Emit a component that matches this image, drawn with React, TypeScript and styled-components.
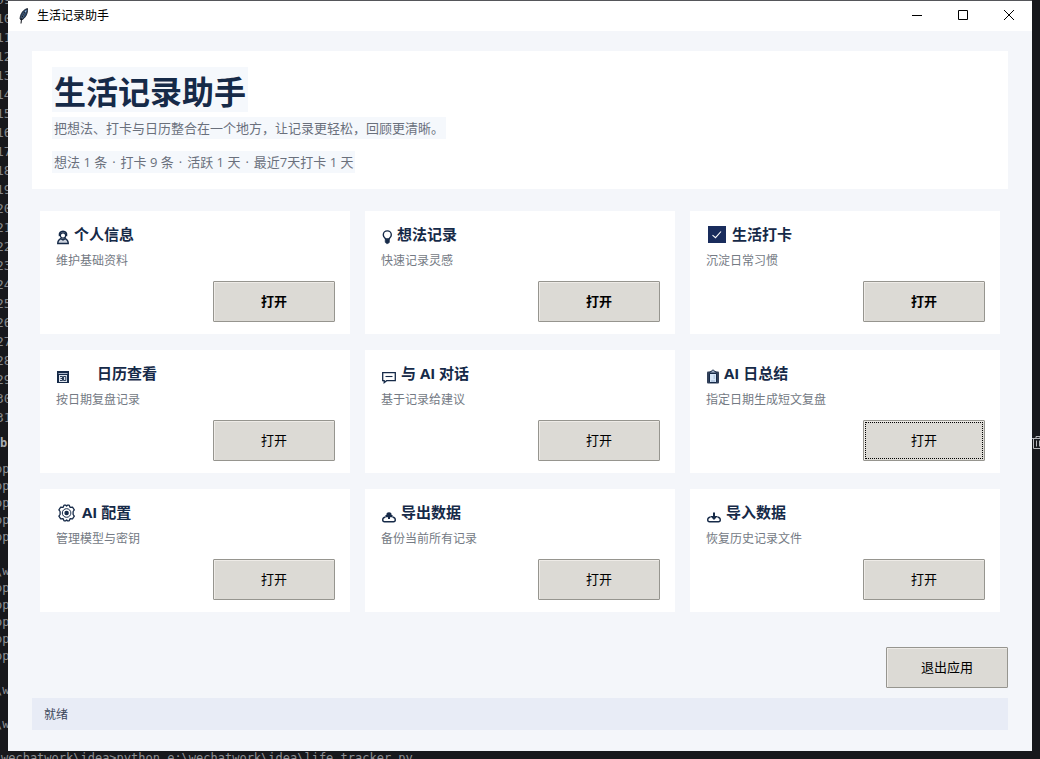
import React from 'react';
import styled, { createGlobalStyle, css } from 'styled-components';

const UI_FONT = '"Open Sans", "Noto Sans CJK SC", sans-serif';
const MONO_FONT = '"DejaVu Sans Mono", monospace';
const NAVY = '#162a48';

const GlobalStyle = createGlobalStyle`
  *, *::before, *::after { box-sizing: border-box; }
  body { margin: 0; background: #17181c; font-family: ${UI_FONT}; }
  h1, h2, p { margin: 0; }
`;

/* Desktop: editor and terminal peek out around the application window */
const Desktop = styled.div`
  display: grid;
  grid-template-columns: 8px minmax(0, 1fr) 8px;
  grid-template-rows: 1fr 8px;
  min-height: 100vh;
  background: #17181c;
`;

const Gutter = styled.div`
  overflow: hidden;
  font-family: ${MONO_FONT};
  color: #8f9094;
  white-space: pre;
`;

const LineNumbers = styled.div`
  margin-top: -10px;
  margin-bottom: 8px;
  font-size: 13px;
  line-height: 19px;
  text-indent: -4px;
  color: #85878a;
`;

const PanelTab = styled.div`
  margin-bottom: 9px;
  font-size: 12px;
  line-height: 17px;
  font-weight: 700;
  color: #a9abb0;
`;

const TerminalLines = styled.div`
  font-size: 12px;
  line-height: 17px;
  text-indent: -5px;
`;

const CodeLine = styled.div`
  height: 1lh;
`;

const RightEdge = styled.div`
  overflow: hidden;
  padding-top: 435px;
  color: #b5b6ba;

  svg { display: block; }
`;

const CommandLine = styled.div`
  grid-column: 1 / -1;
  height: 8px;
  overflow: hidden;
  padding-left: 1px;
  font-family: ${MONO_FONT};
  font-size: 12px;
  line-height: 14px;
  white-space: pre;
  color: #8f9094;
`;

const Window = styled.main`
  display: flex;
  flex-direction: column;
  border-top: 1px solid #55565a;
  background: #f4f6fa;
`;

const TitleBar = styled.header`
  display: flex;
  align-items: center;
  height: 30px;
  padding-left: 10px;
  background: #fff;
  color: #000;
`;

const WindowTitle = styled.span`
  flex: 1;
  margin-left: 7px;
  font-size: 12px;
  line-height: 16px;
`;

const CaptionButton = styled.button`
  display: flex;
  align-items: center;
  justify-content: center;
  width: 46px;
  height: 30px;
  padding: 0 0 2px;
  border: 0;
  background: transparent;
  color: #000;
`;

const Content = styled.div`
  flex: 1;
  display: flex;
  flex-direction: column;
  padding: 20px 24px;
`;

const Hero = styled.section`
  display: flex;
  flex-direction: column;
  align-items: flex-start;
  padding: 16px 20px;
  background: #fff;
`;

const HeroTitle = styled.h1`
  margin-bottom: 5px;
  padding: 4px 2px 0;
  background: #f5f8fc;
  font-size: 32px;
  line-height: 41px;
  font-weight: 700;
  color: ${NAVY};
`;

const HeroText = styled.p`
  padding: 0 2px;
  background: #f5f8fc;
  font-size: 13px;
  line-height: 22px;
  color: #6a707c;

  & + & { margin-top: 12px; }
`;

const Stat = styled.span`
  & + &::before {
    content: "·";
    margin: 0 5px;
  }
`;

const CardGrid = styled.section`
  display: grid;
  grid-template-columns: repeat(3, minmax(0, 1fr));
  gap: 16px 15px;
  margin: 22px 8px 35px;
`;

const Card = styled.article`
  display: flex;
  flex-direction: column;
  padding: 12px 15px 12px 16px;
  background: #fff;
`;

const CardTitle = styled.h2`
  display: flex;
  align-items: flex-start;
  font-size: 15px;
  line-height: 22px;
  font-weight: 700;
  color: ${NAVY};
`;

const IconSlot = styled.span<{ $width: number }>`
  flex: none;
  width: ${(p) => p.$width}px;
  height: 24px;

  svg { display: block; }
`;

const CardText = styled.p`
  margin: 5px 0 11px;
  font-size: 12px;
  line-height: 18px;
  color: #747a84;
`;

const PushButton = styled.button<{ $strong?: boolean; $focused?: boolean }>`
  align-self: flex-end;
  width: 122px;
  height: 41px;
  padding: 0 0 2px;
  border: 1px solid #96958f;
  border-radius: 1px;
  background: #dcdad5;
  box-shadow: inset 1px 1px 0 #eeebe7;
  font-family: ${UI_FONT};
  font-size: 13px;
  line-height: 18px;
  font-weight: ${(p) => (p.$strong ? 700 : 400)};
  color: #000;
  ${(p) => p.$focused && css`
    outline: 1px dotted #000;
    outline-offset: -3px;
  `}
`;

const StatusBar = styled.footer`
  margin-top: 10px;
  padding: 8px 12px 6px;
  background: #e8ecf6;
  font-size: 12px;
  line-height: 18px;
  color: #3a4558;
`;

const Glyph = ({ children, width = 20 }: { children: React.ReactNode; width?: number }) => (
  <svg width={width} height="24" viewBox={`0 0 ${width} 24`} fill="none" stroke={NAVY} strokeWidth="1.3" aria-hidden="true">
    {children}
  </svg>
);

const PersonIcon = () => (
  <Glyph width={18}>
    <path d="M3.600 13c-.6-3 .9-4.700 3.400-4.700s4 1.700 3.400 4.700" strokeWidth="1.700" />
    <circle cx="7" cy="12.500" r="2.700" />
    <path d="M1.700 20.500c0-2.900 1.200-4.100 3-4.900L7 17l2.300-1.400c1.800.8 3 2 3 4.900z" fill="#cdd3de" />
  </Glyph>
);

const BulbIcon = () => (
  <Glyph width={16}>
    <path d="M4.600 16c-.1-.9-2.300-1.700-2.300-4.100a4 4 0 0 1 8 0c0 2.400-2.200 3.200-2.300 4.100z" strokeWidth="1.400" />
    <path d="M4.200 16.300h4.200v3l-1.300 1.300H5.500l-1.300-1.300z" fill={NAVY} strokeWidth=".6" />
  </Glyph>
);

const CheckIcon = () => (
  <Glyph width={26}>
    <rect x="2" y="3" width="18" height="17" fill="#192c5c" stroke="none" />
    <path d="M6.500 12.200l3 2.500 5.500-6.200" stroke="#fff" strokeWidth="1.100" />
  </Glyph>
);

const CalendarIcon = () => (
  <Glyph>
    <rect x="1" y="9" width="12" height="12" fill={NAVY} stroke="none" />
    <path d="M2.500 11.500h9" stroke="#a9b4c8" strokeWidth="1" />
    <rect x="3" y="13" width="8" height="7" fill="#dfe5ee" stroke="none" />
    <path d="M4 14.500h2.500v4H4M4.500 16.500h2M7.500 18.500v-4h2.300v4z" strokeWidth=".9" />
  </Glyph>
);

const ChatIcon = () => (
  <Glyph>
    <path d="M1.700 10.600h12.600v8.100H5.600l-2.400 2v-2H1.700z" />
    <path d="M4.500 14.500h7" strokeWidth="1.100" />
  </Glyph>
);

const ClipboardIcon = () => (
  <Glyph width={18}>
    <rect x="1" y="9.500" width="12" height="12" rx="1" fill="#33415a" stroke="none" />
    <path d="M3.500 11.500h7v9h-7z" fill="#d6e6f8" stroke={NAVY} strokeWidth="1" />
    <path d="M4 11V9.500h1.500a1.500 1.500 0 0 1 3 0H10V11z" fill="#9fb0c6" strokeWidth=".8" />
    <path d="M7.500 14H9M7.500 16H9M5 19h4" stroke="#8aa3c4" strokeWidth=".8" />
  </Glyph>
);

const GearIcon = () => (
  <Glyph width={26}>
    <path
      d="M8 4.200h1.800l.8.900.8-.9h1.800l1 2.200 2.300-.2 1.800 2.600-1.200 1.700v3l1.200 1.700-1.800 2.600-2.300-.2-1 2.200h-1.800l-.8-.9-.8.900H8l-1-2.200-2.300.2-1.800-2.600 1.200-1.700v-3L2.900 8.800l1.800-2.600 2.300.2z"
      strokeLinejoin="round"
    />
    <circle cx="10.600" cy="12" r="4.300" strokeWidth="1" />
    <circle cx="10.600" cy="12" r="1.600" fill={NAVY} />
  </Glyph>
);

const TrayIcon = ({ inbound = false }: { inbound?: boolean }) => (
  <Glyph>
    <path d="M4.500 16c-1.800.3-2.800 1.200-2.800 2.800 0 1.300.7 1.900 1.800 1.900h9c1.100 0 1.800-.6 1.800-1.900 0-1.600-1-2.500-2.800-2.800" strokeWidth="1.400" />
    {inbound ? (
      <path d="M7 11.500h2V15h2.900L8 19l-3.900-4H7z" fill={NAVY} stroke="none" />
    ) : (
      <path d="M8 11.300c2 0 2.700 1.200 2.500 2.500l1.500.9-1 1.500H9V18H7v-1.800H5l-1-1.500 1.500-.9c-.2-1.300.5-2.500 2.500-2.500z" fill={NAVY} stroke="none" />
    )}
  </Glyph>
);

const FeatherIcon = () => (
  <svg width="12" height="18" viewBox="0 0 12 18" fill="none" aria-hidden="true">
    <path d="M9.500 1.500C5.500 2.500 2.300 6.500 2 12l1.400 1.200C7.500 11 10 6.500 9.500 1.500z" fill="#2b4668" stroke="#10151f" strokeWidth=".8" />
    <path d="M8.300 3.500C6 6 4.600 8.500 3.800 11.500" stroke="#9fc0e0" strokeWidth="1.100" />
    <path d="M7 5C4.600 8.500 3.200 12 3 16.500" stroke="#0c0f16" strokeWidth="1" />
  </svg>
);

const TrashIcon = () => (
  <svg width="14" height="15" viewBox="0 0 14 15" fill="none" stroke="currentColor" aria-hidden="true">
    <path d="M0 3.500h12M4 3.500v-2h4v2M1.500 3.500v10h9v-10M4.500 5.500v6M7.500 5.500v6" />
  </svg>
);

type Feature = {
  title: string;
  text: string;
  icon: React.ReactNode;
  slot: number;
  strong?: boolean;
  focused?: boolean;
};

const features: Feature[] = [
  { title: '个人信息', text: '维护基础资料', icon: <PersonIcon />, slot: 18, strong: true },
  { title: '想法记录', text: '快速记录灵感', icon: <BulbIcon />, slot: 16, strong: true },
  { title: '生活打卡', text: '沉淀日常习惯', icon: <CheckIcon />, slot: 26, strong: true },
  { title: '日历查看', text: '按日期复盘记录', icon: <CalendarIcon />, slot: 41 },
  { title: '与 AI 对话', text: '基于记录给建议', icon: <ChatIcon />, slot: 20 },
  { title: 'AI 日总结', text: '指定日期生成短文复盘', icon: <ClipboardIcon />, slot: 18, focused: true },
  { title: 'AI 配置', text: '管理模型与密钥', icon: <GearIcon />, slot: 26 },
  { title: '导出数据', text: '备份当前所有记录', icon: <TrayIcon />, slot: 20 },
  { title: '导入数据', text: '恢复历史记录文件', icon: <TrayIcon inbound />, slot: 20 },
];

const stats = ['想法 1 条', '打卡 9 条', '活跃 1 天', '最近7天打卡 1 天'];
const lineNumbers = Array.from({ length: 23 }, (_, i) => String(i + 9).padStart(2, '0'));
const terminal = ['op', 'op', 'op', 'op', 'op', '', '\\w', 'op', 'op', 'op', 'op', 'op', '', '\\w', '', '\\w'];

export default function App() {
  return (
    <>
      <GlobalStyle />
      <Desktop>
        <Gutter>
          <LineNumbers>
            {lineNumbers.map((n) => <CodeLine key={n}>{n}</CodeLine>)}
          </LineNumbers>
          <PanelTab>b</PanelTab>
          <TerminalLines>
            {terminal.map((line, i) => <CodeLine key={i}>{line}</CodeLine>)}
          </TerminalLines>
        </Gutter>

        <Window>
          <TitleBar>
            <FeatherIcon />
            <WindowTitle>生活记录助手</WindowTitle>
            <CaptionButton aria-label="最小化">
              <svg width="10" height="10" stroke="currentColor"><path d="M0 5.500h10" /></svg>
            </CaptionButton>
            <CaptionButton aria-label="最大化">
              <svg width="10" height="10" stroke="currentColor" fill="none"><path d="M.5.5h9v9h-9z" /></svg>
            </CaptionButton>
            <CaptionButton aria-label="关闭">
              <svg width="10" height="10" stroke="currentColor"><path d="M0 0l10 10M10 0L0 10" /></svg>
            </CaptionButton>
          </TitleBar>

          <Content>
            <Hero>
              <HeroTitle>生活记录助手</HeroTitle>
              <HeroText>把想法、打卡与日历整合在一个地方，让记录更轻松，回顾更清晰。</HeroText>
              <HeroText>
                {stats.map((s) => <Stat key={s}>{s}</Stat>)}
              </HeroText>
            </Hero>

            <CardGrid>
              {features.map((f) => (
                <Card key={f.title}>
                  <CardTitle>
                    <IconSlot $width={f.slot}>{f.icon}</IconSlot>
                    {f.title}
                  </CardTitle>
                  <CardText>{f.text}</CardText>
                  <PushButton type="button" $strong={f.strong} $focused={f.focused} aria-label={`打开 ${f.title}`}>
                    打开
                  </PushButton>
                </Card>
              ))}
            </CardGrid>

            <PushButton type="button">退出应用</PushButton>
            <StatusBar>就绪</StatusBar>
          </Content>
        </Window>

        <RightEdge><TrashIcon /></RightEdge>
        <CommandLine>{'wechatwork\\idea>python e:\\wechatwork\\idea\\life_tracker.py'}</CommandLine>
      </Desktop>
    </>
  );
}
